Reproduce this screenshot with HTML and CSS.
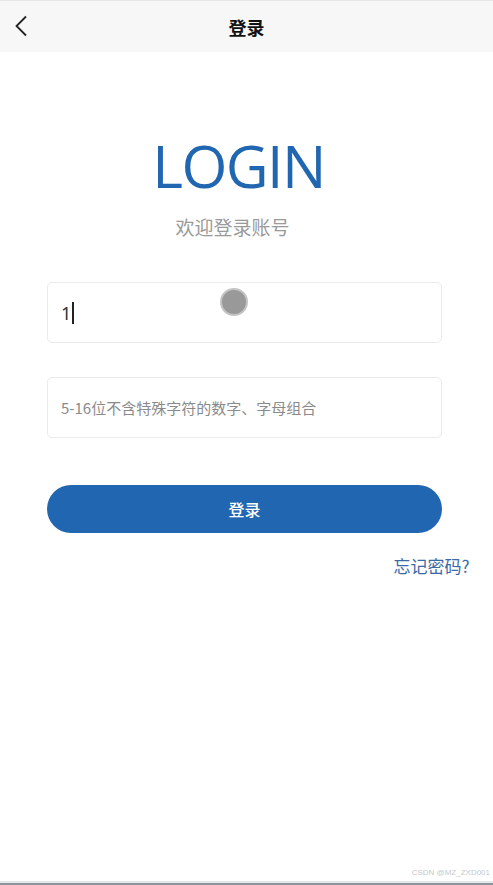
FILE: index.html
```html
<!DOCTYPE html>
<html lang="zh">
<head>
<meta charset="utf-8">
<title>登录</title>
<link rel="stylesheet" href="styles.css">
</head>
<body>
<div class="page">
  <header class="navbar">
    <span class="back">
      <svg width="14" height="22" viewBox="0 0 14 22"><path d="M12 1.5 L2.5 11 L12 20.5" fill="none" stroke="#222" stroke-width="1.8"/></svg>
    </span>
    <h1 class="title">登录</h1>
  </header>
  <main class="content">
    <div class="logo">LOGIN</div>
    <div class="welcome">欢迎登录账号</div>
    <div class="field field-user">
      <span class="value">1</span><span class="caret"></span>
      <span class="touch"></span>
    </div>
    <div class="field field-pass">
      <span class="placeholder">5-16位不含特殊字符的数字、字母组合</span>
    </div>
    <button class="btn">登录</button>
    <div class="forgot-row"><a class="forgot">忘记密码?</a></div>
  </main>
  <div class="watermark">CSDN @MZ_ZXD001</div>
  <div class="bottom-bar"></div>
</div>
</body>
</html>
```
FILE: styles.css
```css
* { box-sizing: border-box; }
html, body { margin: 0; padding: 0; background: #fff; }
body { font-family: "Noto Sans CJK SC", "Noto Sans", sans-serif; }
.page {
  width: 493px;
  height: 885px;
  display: flex;
  flex-direction: column;
  position: relative;
  overflow: hidden;
}
.navbar {
  height: 52px;
  background: #f7f7f7;
  border-top: 1px solid #e6e6e6;
  display: flex;
  align-items: center;
  justify-content: center;
  position: relative;
  flex: none;
}
.back {
  position: absolute;
  left: 14px;
  top: 14px;
  display: flex;
}
.title {
  margin: 0;
  font-size: 18px;
  font-weight: 700;
  color: #111;
}
.content {
  flex: 1;
  display: flex;
  flex-direction: column;
  align-items: center;
  padding: 78px 51px 0 47px;
}
.logo {
  font-family: "Open Sans", "Noto Sans", sans-serif;
  font-size: 59px;
  line-height: 70px;
  color: #2166b0;
  letter-spacing: -1.6px;
  margin-left: -12px;
}
.welcome {
  margin-top: 14px;
  font-size: 19px;
  line-height: 26px;
  color: #9a9a9a;
  margin-left: -24px;
}
.field {
  margin-top: 42px;
  width: 395px;
  height: 61px;
  border: 1px solid #ebebeb;
  border-radius: 5px;
  display: flex;
  align-items: center;
  padding-left: 13px;
  position: relative;
}
.field-pass { margin-top: 34px; }
.value {
  font-family: "Noto Sans", sans-serif;
  font-size: 18px;
  color: #333;
}
.caret {
  width: 1.5px;
  height: 22px;
  background: #222;
  margin-left: 1px;
}
.placeholder {
  font-size: 15px;
  color: #8a8a8a;
}
.touch {
  position: absolute;
  left: 172px;
  top: 5px;
  width: 28px;
  height: 28px;
  border-radius: 50%;
  background: #999;
  border: 2px solid #c4c4c4;
}
.btn {
  margin-top: 47px;
  width: 395px;
  height: 48px;
  border: none;
  border-radius: 24px;
  background: #2166b0;
  color: #fff;
  font-family: "Noto Sans CJK SC", sans-serif;
  font-size: 16px;
  font-weight: 500;
}
.forgot-row {
  width: 395px;
  display: flex;
  justify-content: flex-end;
  margin-top: 20px;
  margin-right: -55px;
  padding-right: 0;
}
.forgot {
  font-size: 17px;
  color: #3b6aa5;
}
.watermark {
  position: absolute;
  right: 3px;
  bottom: 8px;
  font-family: "Liberation Sans", sans-serif;
  font-size: 8px;
  color: #c8c8c8;
}
.bottom-bar {
  height: 4px;
  flex: none;
  background: #e4e8ec;
  border-bottom: 2px solid #8d9499;
}
```
